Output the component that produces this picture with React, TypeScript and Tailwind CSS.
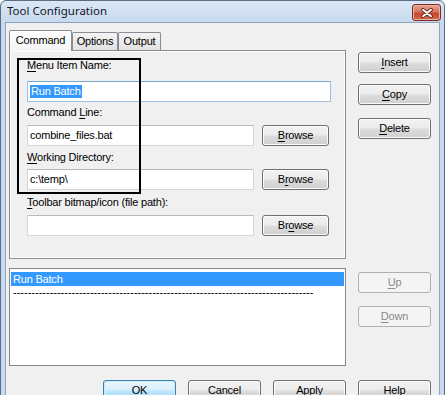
import React from "react";

function U({ children }: { children: React.ReactNode }) {
  return <span className="underline decoration-1 underline-offset-[2px]">{children}</span>;
}

const btnBase =
  "h-[21px] w-[73px] shrink-0 rounded-[3px] border flex items-center justify-center text-[11px] leading-[13px]";
const btnNormal =
  "border-[#707070] text-black bg-[linear-gradient(to_bottom,#f2f2f2_0%,#ebebeb_48%,#dddddd_52%,#cfcfcf_100%)] shadow-[inset_0_0_0_1px_#fbfbfb]";
const btnDisabled = "border-[#adb2b5] text-[#8a8a8a] bg-[#f4f4f4]";
const btnDefault =
  "border-[#3c7fb1] text-black bg-[linear-gradient(to_bottom,#eaf6fd_0%,#d9f0fc_48%,#bee6fd_52%,#a7d9f5_100%)] shadow-[inset_0_0_0_1px_#c9ebfb]";

function Btn({
  children,
  kind = "normal",
  className = "",
}: {
  children: React.ReactNode;
  kind?: "normal" | "disabled" | "default";
  className?: string;
}) {
  const k = kind === "disabled" ? btnDisabled : kind === "default" ? btnDefault : btnNormal;
  return <div className={`${btnBase} ${k} ${className}`}>{children}</div>;
}

function Field({ w, children }: { w: string; children?: React.ReactNode }) {
  return (
    <div
      className={`${w} h-[21px] shrink-0 border border-[#d6d6d6] border-t-[#b9b9b9] bg-white flex items-center pl-[2px] rounded-[1px]`}
    >
      {children}
    </div>
  );
}

export default function App() {
  const dashes = "-".repeat(82);
  return (
    <div className="w-[445px] h-[395px] overflow-hidden bg-white font-['Liberation_Sans',Arial,sans-serif] text-[11px] leading-[13px] tracking-[-0.2px] text-black">
      <div className="w-[445px] h-[440px] rounded-t-[6px] border border-[#5a6c82] bg-[linear-gradient(to_bottom,#dbe7f5_0px,#c7d9ee_22px,#c7d9ee_100%)] flex flex-col">
        {/* Title bar */}
        <div className="h-[21px] shrink-0 flex items-start justify-between">
          <span className="pl-[6px] pt-[2px] font-['Noto_Sans',sans-serif] text-[11.5px] leading-[16px] tracking-normal text-[#15152a]">
            Tool Configuration
          </span>
          <div className="mt-[3px] mr-[3px] w-[29px] h-[17px] rounded-[3px] border border-[#7b2a22] bg-[linear-gradient(to_bottom,#e7a495_0%,#d6735f_45%,#c5472f_55%,#cf6a4f_100%)] shadow-[inset_0_0_0_1px_#eab1a5] flex items-center justify-center">
            <svg width="12" height="10" viewBox="0 0 12 10">
              <path d="M2 1.8 L10 8.2 M10 1.8 L2 8.2" stroke="#5b1f18" strokeWidth="3.6" strokeLinecap="round" />
              <path d="M2 1.8 L10 8.2 M10 1.8 L2 8.2" stroke="#ffffff" strokeWidth="2" strokeLinecap="round" />
            </svg>
          </div>
        </div>

        {/* Client area */}
        <div className="mx-[4px] flex-1 border border-[#8fa4be] bg-[#f0f0f0] pl-[3px] pt-[7px] pr-[8px]">
          <div className="flex">
            {/* Left column */}
            <div className="w-[337px] flex flex-col">
              {/* Tabs */}
              <div className="flex items-end h-[20px] relative z-10">
                <div className="w-[63px] h-[21px] -mb-px border border-b-0 border-[#898c95] rounded-t-[2px] bg-[linear-gradient(to_bottom,#ffffff,#f4f4f4)] pt-[3px] text-center">
                  Command
                </div>
                <div className="w-[46px] h-[18px] border border-b-0 border-[#898c95] rounded-t-[2px] bg-[linear-gradient(to_bottom,#f3f3f3,#e2e2e2)] pt-[2px] text-center">
                  Options
                </div>
                <div className="w-[43px] h-[18px] border border-b-0 border-[#898c95] rounded-t-[2px] bg-[linear-gradient(to_bottom,#f3f3f3,#e2e2e2)] pt-[2px] text-center">
                  Output
                </div>
              </div>

              {/* Panel */}
              <div className="relative h-[209px] border border-[#898c95] bg-[#f0f0f0] pl-[17px] pt-[8px] shadow-[inset_1px_1px_0_#fbfbfb,inset_-1px_-1px_0_#fbfbfb] flex flex-col">
                <div>
                  <U>M</U>enu Item Name:
                </div>
                <div className="mt-[9px]">
                  <div className="w-[304px] h-[21px] border border-[#9cc0e4] border-t-[#7ba7d3] bg-white flex items-center pl-[2px] rounded-[1px]">
                    <span className="bg-[#3399ff] text-white px-[1px] leading-[13px]">Run Batch</span>
                  </div>
                </div>
                <div className="mt-[4px]">
                  Command <U>L</U>ine:
                </div>
                <div className="mt-[6px] flex items-center">
                  <Field w="w-[227px]">combine_files.bat</Field>
                  <Btn className="ml-[8px] !w-[67px]">
                    <U>B</U>rowse
                  </Btn>
                </div>
                <div className="mt-[5px]">
                  <U>W</U>orking Directory:
                </div>
                <div className="mt-[5px] flex items-center">
                  <Field w="w-[227px]">c:\temp\</Field>
                  <Btn className="ml-[8px] !w-[67px]">
                    B<U>r</U>owse
                  </Btn>
                </div>
                <div className="mt-[6px]">
                  <U>T</U>oolbar bitmap/icon (file path):
                </div>
                <div className="mt-[6px] flex items-center">
                  <Field w="w-[227px]" />
                  <Btn className="ml-[8px] !w-[67px]">
                    Br<U>o</U>wse
                  </Btn>
                </div>

                {/* Annotation box */}
                <div className="absolute left-[7px] top-[7px] w-[124px] h-[136px] border-2 border-black pointer-events-none" />
              </div>

              {/* List */}
              <div className="mt-[9px] h-[98px] border border-[#828790] bg-white px-[1px] pt-[3px] flex flex-col">
                <div className="h-[14px] bg-[#3399ff] text-white pl-[2px] leading-[14px]">Run Batch</div>
                <div className="h-[13px] pl-[2px] overflow-hidden whitespace-nowrap tracking-normal">{dashes}</div>
              </div>
            </div>

            {/* Right column */}
            <div className="ml-[12px] w-[73px] flex flex-col">
              <Btn className="mt-[22px]">
                <U>I</U>nsert
              </Btn>
              <Btn className="mt-[11px]">
                <U>C</U>opy
              </Btn>
              <Btn className="mt-[13px]">
                <U>D</U>elete
              </Btn>
              <Btn kind="disabled" className="mt-[133px]">
                <U>U</U>p
              </Btn>
              <Btn kind="disabled" className="mt-[13px]">
                <U>D</U>own
              </Btn>
            </div>
          </div>

          {/* Bottom buttons */}
          <div className="flex justify-end gap-[12px] mt-[14px]">
            <Btn kind="default">OK</Btn>
            <Btn>Cancel</Btn>
            <Btn>Apply</Btn>
            <Btn>Help</Btn>
          </div>
        </div>
      </div>
    </div>
  );
}
